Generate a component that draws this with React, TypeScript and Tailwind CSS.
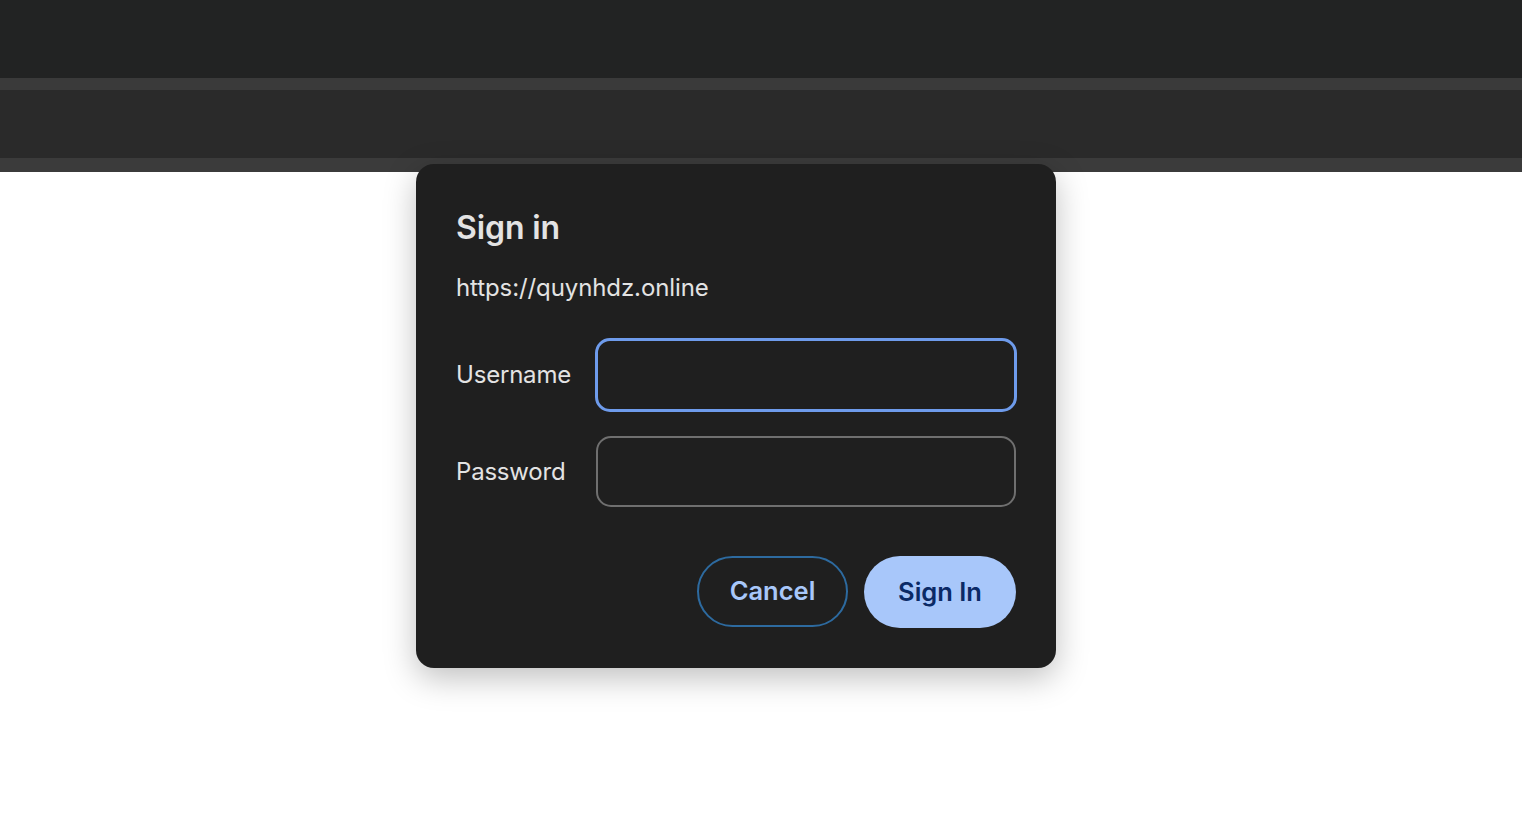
export default function App() {
  return (
    <div className="relative h-[818px] w-full overflow-hidden bg-white" style={{ fontFamily: "Inter, 'Noto Sans', sans-serif" }}>
      <div className="h-[78px] bg-[#222323]" />
      <div className="h-[12px] bg-[#3a3a3a]" />
      <div className="h-[68px] bg-[#2a2a2a]" />
      <div className="h-[14px] bg-[#3b3b3b]" />

      <div className="absolute left-[416px] top-[164px] w-[640px] rounded-[18px] bg-[#1f1f1f] px-10 pb-10 pt-[40px] text-[#e3e3e3] shadow-[0_10px_32px_rgba(0,0,0,0.25)]">
        <h1 className="text-[32px] font-semibold leading-[48px] tracking-[-0.1px]">Sign in</h1>
        <p className="mt-[20px] text-[24px] leading-[32px] tracking-[-0.1px]">https://quynhdz.online</p>

        <div className="mt-[34px] flex flex-col gap-[24px]">
          <div className="flex items-center">
            <label className="w-[140px] text-[24px] tracking-[-0.2px]">Username</label>
            <div className="-mx-px h-[74px] flex-1 rounded-[15px] border-[3px] border-[#6e9beb] bg-[#1f1f1f]" />
          </div>
          <div className="flex items-center">
            <label className="w-[140px] text-[24px] tracking-[-0.2px]">Password</label>
            <div className="h-[71px] flex-1 rounded-[15px] border-2 border-[#6f6f6f] bg-[#1f1f1f]" />
          </div>
        </div>

        <div className="mt-[49px] flex justify-end gap-[16px]">
          <button className="h-[71px] w-[151px] rounded-full border-2 border-[#2d6a9f] text-[25.5px] font-semibold text-[#a8c7fa]">
            Cancel
          </button>
          <button className="h-[72px] w-[152px] rounded-full bg-[#a8c7fa] text-[25.5px] font-semibold text-[#0b2a66]">
            Sign In
          </button>
        </div>
      </div>
    </div>
  );
}
